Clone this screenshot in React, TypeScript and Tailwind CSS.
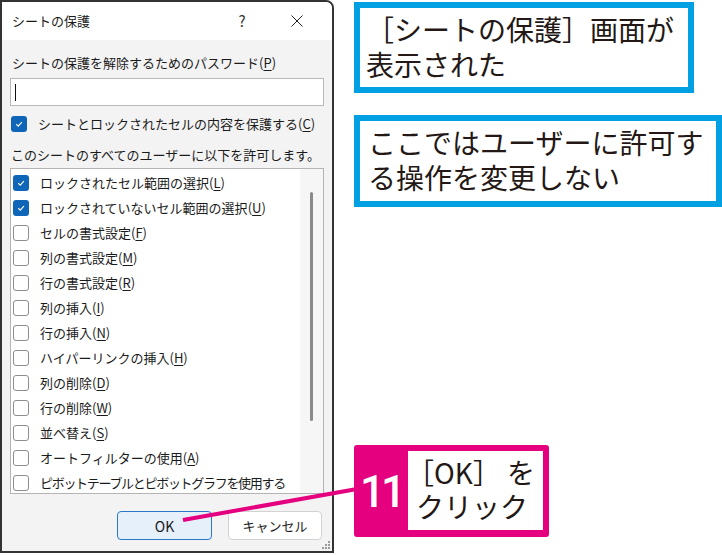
import React from 'react';

const jp = { fontFamily: '"Noto Sans CJK JP", "Noto Sans", sans-serif' };

interface Perm {
  label: string;
  key?: string;
  checked?: boolean;
  tight?: boolean;
}

const perms: Perm[] = [
  { label: 'ロックされたセル範囲の選択', key: 'L', checked: true },
  { label: 'ロックされていないセル範囲の選択', key: 'U', checked: true },
  { label: 'セルの書式設定', key: 'F' },
  { label: '列の書式設定', key: 'M' },
  { label: '行の書式設定', key: 'R' },
  { label: '列の挿入', key: 'I' },
  { label: '行の挿入', key: 'N' },
  { label: 'ハイパーリンクの挿入', key: 'H' },
  { label: '列の削除', key: 'D' },
  { label: '行の削除', key: 'W' },
  { label: '並べ替え', key: 'S' },
  { label: 'オートフィルターの使用', key: 'A' },
  { label: 'ピボットテーブルとピボットグラフを使用する', tight: true },
];

const Check = ({ checked }: { checked?: boolean }) =>
  checked ? (
    <span className="flex h-4 w-4 shrink-0 items-center justify-center rounded-[3px] bg-[#0f66b8]">
      <svg width="10" height="10" viewBox="0 0 10 10">
        <path d="M2.2 5.2 L4.2 7.1 L7.9 3.2" fill="none" stroke="#fff" strokeWidth="1.1" />
      </svg>
    </span>
  ) : (
    <span className="h-4 w-4 shrink-0 rounded-[3px] border border-[#8e8e8e] bg-white" />
  );

// label text followed by the underlined access key
const Accel = ({ text, k }: { text: string; k?: string }) => (
  <span className="whitespace-nowrap">
    {text}
    {k && (
      <>
        (<span className="underline underline-offset-2">{k}</span>)
      </>
    )}
  </span>
);

const Dialog = () => (
  <div
    className="relative flex h-[553px] w-[334px] shrink-0 flex-col overflow-hidden rounded-tr-[8px] border-2 border-[#333] bg-[#f3f3f3] text-[13px] leading-[18px] text-[#1b1b1b]"
    style={jp}
  >
    <div className="flex h-[38px] shrink-0 items-center bg-white pl-[10px]">
      <span className="flex-1">シートの保護</span>
      <span className="w-[20px] text-center text-[15px] text-[#333]">?</span>
      <span className="flex w-[80px] justify-center pl-[10px]">
        <svg width="14" height="14" viewBox="0 0 14 14">
          <path d="M1.5 1.5 L12.5 12.5 M12.5 1.5 L1.5 12.5" stroke="#222" strokeWidth="1" />
        </svg>
      </span>
    </div>

    <div className="flex flex-1 flex-col px-2">
      <div className="mt-[14px] pl-[2px]">
        <Accel text="シートの保護を解除するためのパスワード" k="P" />
      </div>
      <div className="mt-[6px] flex h-[28px] items-center border border-[#b9b9b9] bg-white pl-[4px]">
        <span className="h-[17px] w-px bg-[#111]" />
      </div>
      <div className="mt-[9px] flex items-center gap-[11px] pl-[1px]">
        <Check checked />
        <Accel text="シートとロックされたセルの内容を保護する" k="C" />
      </div>
      <div className="mt-[13px] whitespace-nowrap pl-[1px]">このシートのすべてのユーザーに以下を許可します。</div>

      <div className="mt-[4px] flex h-[326px] overflow-hidden border border-[#b4b4b4] bg-white">
        <div className="flex min-w-0 flex-1 flex-col pl-[2px] pt-px">
          {perms.map((p) => (
            <div
              key={p.label}
              className={`flex h-[25px] shrink-0 items-center gap-[11px] ${p.tight ? 'tracking-[-1.3px]' : ''}`}
            >
              <Check checked={p.checked} />
              <Accel text={p.label} k={p.key} />
            </div>
          ))}
        </div>
        <div className="flex w-[23px] shrink-0 justify-center bg-[#f6f6f6] pt-[23px]">
          <span className="h-[229px] w-[3px] rounded-full bg-[#8a8a8a]" />
        </div>
      </div>

      <div className="mt-[17px] flex justify-end gap-[16px] pr-[2px]">
        <button className="h-[29px] w-[95px] rounded-[4px] border border-[#2a78c8] bg-[#e6f0fa] text-[14px] text-[#1b1b1b]">
          OK
        </button>
        <button className="h-[29px] w-[94px] rounded-[4px] border border-[#d2d2d2] bg-white text-[13px] text-[#1b1b1b]">
          キャンセル
        </button>
      </div>
    </div>

    <svg className="absolute bottom-[1px] right-[1px]" width="11" height="11" viewBox="0 0 11 11">
      {[
        [8, 2],
        [5, 5],
        [8, 5],
        [2, 8],
        [5, 8],
        [8, 8],
      ].map(([x, y]) => (
        <rect key={`${x}-${y}`} x={x} y={y} width="2" height="2" fill="#9a9a9a" />
      ))}
    </svg>
  </div>
);

export default function App() {
  return (
    <div className="relative flex h-[555px] w-[722px] overflow-hidden bg-white">
      <Dialog />

      <div className="ml-[20px] flex flex-col pt-[2px] text-[28px] leading-[35px] text-[#231815]" style={jp}>
        <div className="h-[91px] w-[340px] border-[6px] border-[#00a0e3] bg-white pl-[6px] pt-[4px]">
          ［シートの保護］画面が
          <br />
          表示された
        </div>
        <div className="mt-[22px] h-[92px] w-[368px] border-[6px] border-[#00a0e3] bg-white pl-[8px] pt-[4px]">
          ここではユーザーに許可す
          <br />
          る操作を変更しない
        </div>
        <div className="mt-[238px] flex h-[92px] w-[195px] rounded-[3px] bg-[#e5007f] pb-[7px] pr-[6px] pt-[6px]">
          <div
            className="flex w-[54px] items-center justify-center pt-[4px] text-[44px] font-medium tracking-[-4px] text-white"
            style={{ fontFamily: 'Roboto, "Noto Sans", sans-serif' }}
          >
            11
          </div>
          <div className="flex-1 whitespace-nowrap bg-white pl-[8px] pt-[4px] leading-[34px]">
            <span className="-ml-[10px]">［</span>OK］<span className="ml-[6px]">を</span>
            <br />
            クリック
          </div>
        </div>
      </div>

      <svg className="pointer-events-none absolute left-0 top-0" width="722" height="555">
        <line x1="183" y1="520" x2="357" y2="489" stroke="#e5007f" strokeWidth="4" />
      </svg>
    </div>
  );
}
